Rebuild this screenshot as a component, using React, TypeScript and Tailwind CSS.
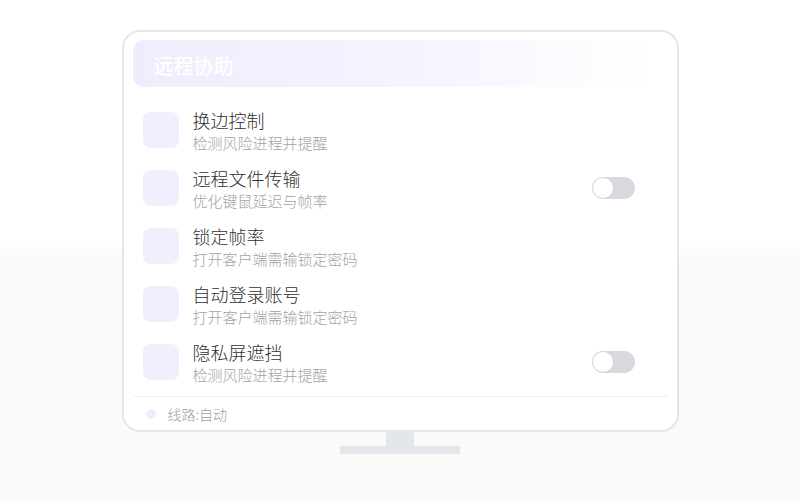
import React from "react";

const rows = [
  { title: "换边控制", sub: "检测风险进程并提醒", toggle: false },
  { title: "远程文件传输", sub: "优化键鼠延迟与帧率", toggle: true },
  { title: "锁定帧率", sub: "打开客户端需输锁定密码", toggle: false },
  { title: "自动登录账号", sub: "打开客户端需输锁定密码", toggle: false },
  { title: "隐私屏遮挡", sub: "检测风险进程并提醒", toggle: true },
];

function Toggle() {
  return (
    <div className="w-[43px] h-[22px] rounded-full bg-[#d7d9df] p-[1px] flex items-center">
      <div className="w-[20px] h-[20px] rounded-full bg-white" />
    </div>
  );
}

export default function App() {
  return (
    <div
      className="w-[800px] h-[500px] flex flex-col items-center pt-[30px] bg-[linear-gradient(to_bottom,#ffffff_0%,#ffffff_48%,#fafafb_52%,#fafafb_100%)]"
      style={{ fontFamily: '"Noto Sans CJK SC", "Noto Sans", sans-serif' }}
    >
      <div className="w-[557px] border-2 border-[#e4e6ea] rounded-[18px] bg-white flex flex-col">
        <div className="px-[9px] pt-[8px]">
          <div className="h-[47px] rounded-[11px] bg-[linear-gradient(to_right,#efecfd_0%,#f5f3fe_50%,#ffffff_97%)] flex items-center pl-[21px] pt-[4px]">
            <span className="text-white text-[20px] font-medium leading-none">远程协助</span>
          </div>
        </div>
        <div className="mt-[14px] flex flex-col pl-[19px] pr-[42px]">
          {rows.map((r) => (
            <div key={r.title} className="h-[58px] flex items-center">
              <div className="w-[36px] h-[36px] rounded-[8px] bg-[#f1effd] shrink-0" />
              <div className="ml-[14px] flex flex-col mt-[2px] flex-1">
                <div className="text-[18px] leading-[24px] font-light text-[#303030]">{r.title}</div>
                <div className="text-[15px] leading-[22px] font-light text-[#a3a3a3]">{r.sub}</div>
              </div>
              {r.toggle && <Toggle />}
            </div>
          ))}
        </div>
        <div className="mx-[10px] mt-[5px] h-px bg-[#eceef2]" />
        <div className="h-[33px] flex items-center pl-[22px]">
          <div className="w-[10px] h-[10px] rounded-full bg-[#efedfc]" />
          <span className="ml-[12px] text-[14px] font-light text-[#9e9e9e] leading-none">线路:自动</span>
        </div>
      </div>
      <div className="w-[28px] h-[14px] bg-[#e3e6ea]" />
      <div className="w-[120px] h-[8px] bg-[#e3e6ea]" />
    </div>
  );
}
